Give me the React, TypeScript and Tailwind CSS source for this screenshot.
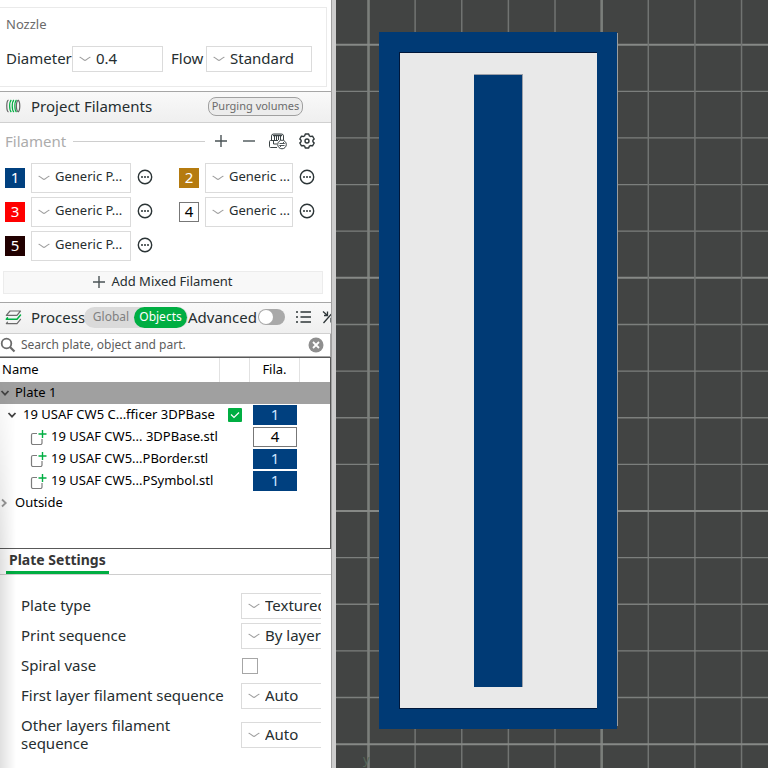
import type { ReactNode } from "react";
import clsx from "clsx";

const FILAMENTS = [
  { id: 1, name: "Generic P...", swatch: "bg-[#00407f] text-white" },
  { id: 2, name: "Generic ...", swatch: "bg-[#b57b0f] text-white" },
  { id: 3, name: "Generic P...", swatch: "bg-[#ff0000] text-white" },
  { id: 4, name: "Generic ...", swatch: "bg-white text-black border border-[#777]" },
  { id: 5, name: "Generic P...", swatch: "bg-[#210000] text-white" },
];

const PARTS = [
  { name: "19 USAF CW5... 3DPBase.stl", filament: 4 },
  { name: "19 USAF CW5...PBorder.stl", filament: 1 },
  { name: "19 USAF CW5...PSymbol.stl", filament: 1 },
];

function WaveChevron() {
  return (
    <svg
      className="pointer-events-none absolute left-[7px] top-1/2 -translate-y-1/2"
      width="12"
      height="6"
      viewBox="0 0 12 6"
      fill="none"
      stroke="#9d9d9d"
      strokeWidth="1.1"
      strokeLinecap="round"
    >
      <path d="M1 1.200C3 2 4.600 4.400 6 4.400S9 2 11 1.200" />
    </svg>
  );
}

function Select({ id, label, value, className }: { id: string; label?: string; value: string; className?: string }) {
  return (
    <div className="relative shrink-0">
      <select
        id={id}
        aria-label={label}
        className={clsx(
          "block appearance-none border border-[#dbdbdb] bg-white pb-0.5 pl-[23px] text-[#262e30] outline-none",
          className
        )}
      >
        <option>{value}</option>
      </select>
      <WaveChevron />
    </div>
  );
}

function MoreButton({ label }: { label: string }) {
  return (
    <button type="button" aria-label={label} className="pb-0.5">
      <svg width="16" height="16" viewBox="0 0 16 16" fill="none">
        <circle cx="8" cy="8" r="6.700" stroke="#2b3436" strokeWidth="1.4" />
        <circle cx="5" cy="8" r="1" fill="#2b3436" />
        <circle cx="8" cy="8" r="1" fill="#2b3436" />
        <circle cx="11" cy="8" r="1" fill="#2b3436" />
      </svg>
    </button>
  );
}

function TreeArrow({ open, color }: { open: boolean; color: string }) {
  return (
    <svg width="10" height="10" viewBox="0 0 10 10" fill="none" stroke={color} strokeWidth="1.8">
      {open ? <path d="M1.500 3L5 6.700 8.500 3" /> : <path d="M2 1.500L5.700 5 2 8.500" />}
    </svg>
  );
}

function PartIcon() {
  return (
    <svg width="17" height="17" viewBox="0 0 17 17" fill="none">
      <path d="M7 4.500H3A1.500 1.500 0 0 0 1.500 6v8A1.500 1.500 0 0 0 3 15.500h7.500A1.500 1.500 0 0 0 12 14v-4" stroke="#7c7c7c" strokeWidth="1.200" />
      <path d="M12.500 1v8M8.500 5h8" stroke="#00ae42" strokeWidth="1.400" />
    </svg>
  );
}

function SpoolIcon() {
  return (
    <svg className="shrink-0" width="16" height="16" viewBox="0 0 16 16" fill="none" strokeWidth="1.200">
      <path d="M3.500 2C1.200 3 1.200 13 3.500 14" stroke="#666" />
      <path d="M6.300 2c-2.200 2-2.200 10 0 12M8.900 2c-2.200 2-2.200 10 0 12M11.500 2c-2.200 2-2.200 10 0 12" stroke="#00ae42" />
      <path d="M13.200 2.200C10.800 3.500 10.800 12.500 13.200 13.800 15.300 12.500 15.300 3.500 13.200 2.200z" stroke="#666" />
    </svg>
  );
}

function LayersIcon() {
  return (
    <svg className="shrink-0" width="17" height="17" viewBox="0 0 17 17" fill="none" strokeWidth="1.200" strokeLinejoin="round" strokeLinecap="round">
      <path d="M5 2h10.500L12 6.300H1.300z" stroke="#6b6b6b" />
      <path d="M15.500 6L12 10.300H1.300l1.200-1.500" stroke="#00ae42" strokeWidth="1.500" />
      <path d="M15.500 10.300L12 14.600H1.300l1.200-1.500" stroke="#6b6b6b" />
    </svg>
  );
}

function AmsSyncIcon() {
  return (
    <svg width="18" height="17" viewBox="0 0 18 17" fill="none" stroke="#3b4345">
      <path d="M2.500 7V3a2 2 0 0 1 2-2h8a2 2 0 0 1 2 2v4" />
      <path d="M4 2.500h9" strokeWidth="1.500" />
      <path d="M5.500 3v4M7.500 3v4M9.500 3v4M11.500 3v4" />
      <path d="M9 7.500H1.500a1 1 0 0 0-1 1v5a1 1 0 0 0 1 1H8M4.500 8v3H8" />
      <circle cx="13" cy="11.500" r="4.300" fill="#fff" />
      <path d="M10.500 10.500h5L14 9M15.500 12.500h-5L12 14" strokeWidth=".9" />
    </svg>
  );
}

function GearIcon() {
  return (
    <svg width="16" height="16" viewBox="0 0 16 16" fill="none" stroke="#2f3739" strokeWidth="1.400" strokeLinejoin="round">
      <path d="M6.300 1h3.400l.6 1.800 1.300.7 1.900-.4 1.700 2.900L13.900 7.300v1.400l1.300 1.300-1.700 2.900-1.900-.4-1.300.7L9.700 15H6.300l-.6-1.800-1.300-.7-1.900.4L.8 10l1.300-1.300V7.300L.8 6l1.700-2.900 1.900.4 1.300-.7z" />
      <circle cx="8" cy="8" r="2" />
    </svg>
  );
}

function PlusIcon() {
  return (
    <svg width="12" height="12" viewBox="0 0 12 12" stroke="#4a5356" strokeWidth="1.400">
      <path d="M6 0v12M0 6h12" />
    </svg>
  );
}

function SectionHeader({ children }: { children: ReactNode }) {
  return (
    <div className="flex h-8 items-center overflow-hidden border-t border-b border-t-[#a6a6a6] border-b-[#d0d0d0] bg-linear-to-b from-[#f9f9f9] to-[#efefef] pb-0.5 pl-[5px]">
      {children}
    </div>
  );
}

function NozzlePanel() {
  return (
    <section className="mt-[7px] mr-1 h-20 border-t border-r border-b border-[#eaeaea] pl-1.5">
      <h2 className="mt-1.5 text-[13px] leading-5 text-[#6b6b6b]">Nozzle</h2>
      <div className="mt-3 flex items-center text-[15px]">
        <label htmlFor="diameter" className="w-[66px] pb-0.5">Diameter</label>
        <Select id="diameter" value="0.4" className="h-[26px] w-[91px]" />
        <label htmlFor="flow" className="ml-2 w-[35px] pb-0.5">Flow</label>
        <Select id="flow" value="Standard" className="h-[26px] w-[106px]" />
      </div>
    </section>
  );
}

function FilamentPanel() {
  return (
    <section className="mt-1">
      <SectionHeader>
        <SpoolIcon />
        <h2 className="ml-[10px] w-[177px] text-[15px]">Project Filaments</h2>
        <button type="button" className="h-[19px] w-[95px] rounded-[8px] border border-[#a0a0a0] bg-[#ececec] text-[11px] leading-4 whitespace-nowrap text-[#6b6b6b]">
          Purging volumes
        </button>
      </SectionHeader>

      <div className="mt-2 flex h-5 items-center pl-[5px] text-[15px] text-[#acacac]">
        <span className="w-[68px]">Filament</span>
        <span className="h-px w-[132px] bg-[#cecece]" />
        <button type="button" aria-label="Add filament" className="ml-[10px]">
          <PlusIcon />
        </button>
        <button type="button" aria-label="Remove filament" className="ml-4">
          <svg width="12" height="12" viewBox="0 0 12 12" stroke="#4a5356" strokeWidth="1.400">
            <path d="M0 6h12" />
          </svg>
        </button>
        <button type="button" aria-label="Sync filaments" className="ml-[14px]">
          <AmsSyncIcon />
        </button>
        <button type="button" aria-label="Filament settings" className="ml-3">
          <GearIcon />
        </button>
      </div>

      <div className="mt-3 grid grid-cols-[174px_1fr] gap-y-1 pl-[5px]">
        {FILAMENTS.map((f, i) => (
          <div key={f.id} className="flex items-center gap-1.5">
            <span className={clsx("flex size-5 items-center justify-center pb-0.5 text-[15px]", f.swatch)}>{f.id}</span>
            <Select
              id={`filament-${f.id}`}
              label={`Filament ${f.id}`}
              value={f.name}
              className={clsx("h-[30px] text-[13px]", i % 2 ? "w-[88px]" : "w-[100px]")}
            />
            <MoreButton label={`Edit filament ${f.id}`} />
          </div>
        ))}
      </div>

      <button type="button" className="mt-[10px] ml-[3px] flex h-[23px] w-[320px] items-center justify-center gap-1.5 border border-[#ececec] bg-[#f8f8f8] pb-0.5 text-[13px]">
        <PlusIcon />
        Add Mixed Filament
      </button>
    </section>
  );
}

function ProcessBar() {
  return (
    <div className="mt-2">
      <SectionHeader>
        <LayersIcon />
        <h2 className="ml-[9px] w-[53px] shrink-0 text-[15px]">Process</h2>
        <div className="flex h-[21px] w-[104px] shrink-0 rounded-full bg-[#dadada] text-[12px]">
          <button type="button" className="w-[50px] pl-1 text-[#808080]">Global</button>
          <button type="button" className="w-[53px] rounded-full bg-[#00ae42] text-white">Objects</button>
        </div>
        <label htmlFor="advanced" className="w-[70px] shrink-0 text-[15px]">Advanced</label>
        <input
          id="advanced"
          type="checkbox"
          role="switch"
          className="h-4 w-[27px] shrink-0 appearance-none rounded-full bg-[#a9a9a9] p-px before:block before:size-[14px] before:rounded-full before:bg-white"
        />
        <button type="button" aria-label="Object list" className="ml-[11px] shrink-0">
          <svg width="15" height="12" viewBox="0 0 15 12" stroke="#2f3739" strokeWidth="1.400">
            <path d="M0 1h2M4.500 1H15M0 6h2M4.500 6H15M0 11h2M4.500 11H15" />
          </svg>
        </button>
        <button type="button" aria-label="Compare presets" className="ml-[11px] shrink-0">
          <svg width="16" height="16" viewBox="0 0 16 16" fill="none" stroke="#2f3739" strokeWidth="1.300">
            <path d="M1.500 14L12 2M1 2.500l4.500 4M5.500 2.500v4H2M9 13.500v-4h4M9 9.500l5 4" />
          </svg>
        </button>
      </SectionHeader>
    </div>
  );
}

function SearchBar() {
  return (
    <div className="flex h-[23px] items-center border-r border-b border-[#a6a6a6] bg-white">
      <svg width="16" height="16" viewBox="0 0 16 16" fill="none" stroke="#6b6b6b" strokeWidth="1.800">
        <circle cx="6.500" cy="6.500" r="4.800" />
        <path d="M10 10l4.500 4.500" strokeWidth="2.200" />
      </svg>
      <input
        type="text"
        aria-label="Search"
        placeholder="Search plate, object and part."
        className="ml-[5px] min-w-0 flex-1 text-[12px] outline-none placeholder:text-[#5c5c5c]"
      />
      <button type="button" aria-label="Clear search" className="mr-1.5">
        <svg width="16" height="16" viewBox="0 0 16 16">
          <circle cx="8" cy="8" r="7.500" fill="#8f8f8f" />
          <path d="M5 5l6 6M11 5l-6 6" stroke="#fff" strokeWidth="1.800" />
        </svg>
      </button>
    </div>
  );
}

function FilamentCell({ id }: { id: number }) {
  return (
    <span
      className={clsx(
        "mx-auto flex h-5 w-11 items-center justify-center pb-0.5 text-[15px]",
        id === 4 ? "border border-[#777] bg-white text-black" : "bg-[#00407f] text-[#cfe6ff]"
      )}
    >
      {id}
    </span>
  );
}

function ObjectTable() {
  return (
    <div className="h-[192px] border-t border-r border-b border-[#585858] bg-white text-[13px] text-black">
      <table className="w-full table-fixed border-separate border-spacing-0">
        <thead>
          <tr className="h-6">
            <th className="border-r border-[#e2e2e2] p-0 pl-0.5 text-left font-normal">Name</th>
            <th className="w-[30px] border-r border-[#e2e2e2] p-0" />
            <th className="w-[50px] border-r border-[#e2e2e2] p-0 text-center font-normal">Fila.</th>
            <th className="w-[30px] p-0" />
          </tr>
        </thead>
        <tbody className="whitespace-nowrap">
          <tr className="h-[22px] bg-[#a0a0a0]">
            <td colSpan={4} className="p-0">
              <div className="flex items-center">
                <TreeArrow open color="#444" />
                <span className="ml-[5px]">Plate 1</span>
              </div>
            </td>
          </tr>
          <tr className="h-[22px]">
            <td className="p-0">
              <div className="flex items-center pl-[7px]">
                <TreeArrow open color="#444" />
                <span className="ml-1.5">19 USAF CW5 C...fficer 3DPBase</span>
              </div>
            </td>
            <td className="p-0">
              <label className="block">
                <input type="checkbox" defaultChecked aria-label="Printable" className="sr-only" />
                <svg className="mx-auto" width="14" height="14" viewBox="0 0 14 14" fill="none">
                  <rect width="14" height="14" rx="1" fill="#00ae42" />
                  <path d="M3 6.500l3 3 5-5" stroke="#fff" strokeWidth="1.200" />
                </svg>
              </label>
            </td>
            <td className="p-0"><FilamentCell id={1} /></td>
            <td className="p-0" />
          </tr>
          {PARTS.map((part) => (
            <tr key={part.name} className="h-[22px]">
              <td className="p-0">
                <div className="flex items-center pl-[30px]">
                  <PartIcon />
                  <span className="ml-1">{part.name}</span>
                </div>
              </td>
              <td className="p-0" />
              <td className="p-0"><FilamentCell id={part.filament} /></td>
              <td className="p-0" />
            </tr>
          ))}
          <tr className="h-[22px]">
            <td colSpan={4} className="p-0">
              <div className="flex items-center">
                <TreeArrow open={false} color="#999" />
                <span className="ml-[5px]">Outside</span>
              </div>
            </td>
          </tr>
        </tbody>
      </table>
    </div>
  );
}

function SettingRow({ id, label, tall, children }: { id: string; label: string; tall?: boolean; children: ReactNode }) {
  return (
    <div className={clsx("flex items-center", tall ? "h-12" : "h-[30px]")}>
      <label htmlFor={id} className={clsx("shrink-0 pb-0.5 leading-[18px]", tall ? "mr-10 w-[180px]" : "w-[220px]")}>
        {label}
      </label>
      {children}
    </div>
  );
}

function PlateSettings() {
  return (
    <section>
      <div className="flex h-[26px] border-b border-[#cecece] pl-1.5">
        <h2 className="border-b-3 border-[#00ae42] px-[3px] text-[14px] leading-[22px] font-bold text-[#363636]">
          Plate Settings
        </h2>
      </div>
      <div className="mt-4 mr-[10px] overflow-hidden pl-[21px] text-[15px]">
        <SettingRow id="plate-type" label="Plate type">
          <Select id="plate-type" value="Textured PEI Plate" className="h-[26px] w-[180px]" />
        </SettingRow>
        <SettingRow id="print-sequence" label="Print sequence">
          <Select id="print-sequence" value="By layer" className="h-[26px] w-[180px]" />
        </SettingRow>
        <SettingRow id="spiral-vase" label="Spiral vase">
          <input id="spiral-vase" type="checkbox" className="ml-px size-4 appearance-none border border-[#a6a6a6] bg-white" />
        </SettingRow>
        <SettingRow id="first-layer" label="First layer filament sequence">
          <Select id="first-layer" value="Auto" className="h-[26px] w-[180px]" />
        </SettingRow>
        <SettingRow id="other-layers" label="Other layers filament sequence" tall>
          <Select id="other-layers" value="Auto" className="h-[26px] w-[180px]" />
        </SettingRow>
      </div>
    </section>
  );
}

const CELL = 46.63;

/* Top view of the build plate with the badge on it */
function PlateView() {
  const lines = Array.from({ length: 40 }, (_, i) => i - 1);
  return (
    <div className="relative min-w-0 flex-1 overflow-hidden bg-[#424443]">
      <svg className="absolute inset-0 size-full" viewBox="0 0 432 768" preserveAspectRatio="xMinYMin slice">
        {lines.map((i) => (
          <g key={i}>
            <path
              d={`M${32.5 + i * CELL} 0V2000`}
              stroke={i % 5 === 0 ? "#7b7f7b" : "#717472"}
              strokeWidth={i % 5 === 0 ? 2.6 : 1.5}
            />
            <path
              d={`M0 ${44.7 + i * CELL}H2000`}
              stroke={i % 5 === 0 ? "#868986" : "#7c7f7d"}
              strokeWidth={i % 5 === 0 ? 2 : 1.3}
            />
          </g>
        ))}
        <text x="27" y="764" fontSize="13" fill="#566658">y</text>
        <path d="M281.500 33v693" stroke="#9a9d9f" />
        <rect x="43" y="32" width="238" height="697" fill="#003a75" />
        <rect x="63" y="52" width="198" height="657" fill="#00173a" />
        <rect x="64" y="53" width="197" height="655" fill="#e9e9e9" />
        <rect x="138" y="74" width="49" height="613" fill="#9b9fa8" />
        <rect x="138" y="75" width="48" height="612" fill="#003a75" />
      </svg>
    </div>
  );
}

export default function App() {
  return (
    <div className="flex min-h-screen bg-white font-['Noto_Sans','Open_Sans',sans-serif] text-[#262e30]">
      <aside className="relative w-[331px] shrink-0 overflow-hidden">
        <NozzlePanel />
        <FilamentPanel />
        <ProcessBar />
        <SearchBar />
        <ObjectTable />
        <PlateSettings />
        {/* soft shade along the window edge */}
        <div className="pointer-events-none absolute bottom-0 left-0 h-[410px] w-4 bg-linear-to-r from-black/12 to-transparent mask-t-from-50%" />
      </aside>
      <div className="w-[5px] shrink-0 border-l border-[#a0a0a0] bg-[#cdcdcd]" />
      <PlateView />
    </div>
  );
}
